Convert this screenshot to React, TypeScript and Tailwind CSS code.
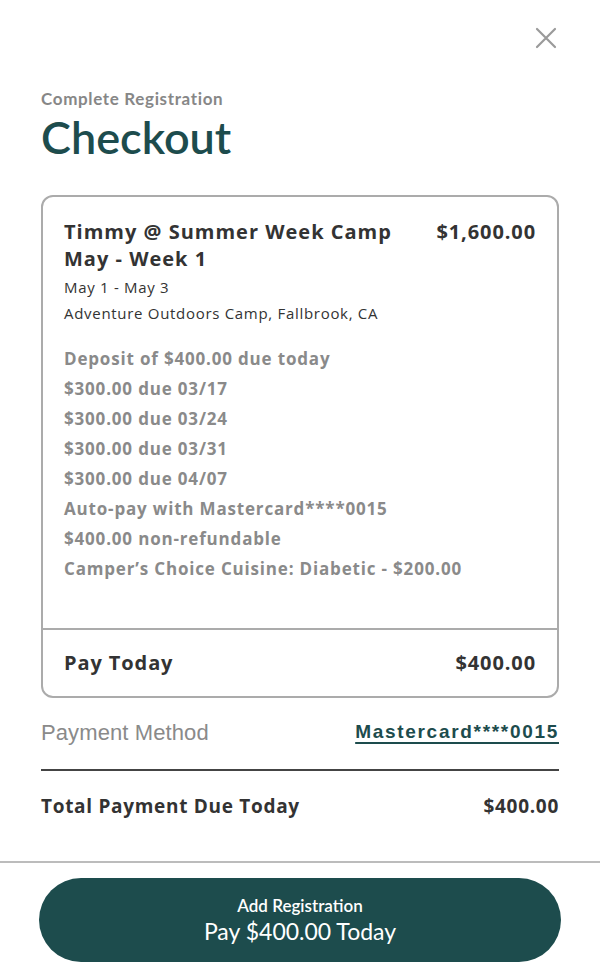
const schedule = [
  "Deposit of $400.00 due today",
  "$300.00 due 03/17",
  "$300.00 due 03/24",
  "$300.00 due 03/31",
  "$300.00 due 04/07",
  "Auto-pay with Mastercard****0015",
  "$400.00 non-refundable",
  "Camper\u2019s Choice Cuisine: Diabetic - $200.00",
];

const App = () => {
  return (
    <div className="w-[600px] h-[977px] bg-white flex flex-col font-['Open_Sans',sans-serif]">
      <div className="flex justify-end pt-[27px] pr-[43px]">
        <svg width="22" height="22" viewBox="0 0 22 22" className="text-[#9a9a9a]">
          <path d="M2 2 L20 20 M20 2 L2 20" stroke="currentColor" strokeWidth="2.2" strokeLinecap="round" />
        </svg>
      </div>

      <div className="px-[41px] pt-[40px]">
        <div className="font-['Lato',sans-serif] font-bold text-[17px] leading-[20px] tracking-[0.65px] text-[#878787]">Complete Registration</div>
        <h1 className="font-['Lato',sans-serif] font-semibold text-[45px] leading-[52px] text-[#1d4c4d] mt-[2px]">Checkout</h1>

        <div className="mt-[32px] border-2 border-[#ababab] rounded-[12px] flex flex-col h-[503px]">
          <div className="flex-1 px-[21px] pt-[21px]">
            <div className="flex justify-between gap-6">
              <div className="font-bold text-[20px] leading-[27px] tracking-[1px] text-[#333]">
                Timmy @ Summer Week Camp<br />May - Week 1
              </div>
              <div className="font-bold text-[20px] leading-[27px] tracking-[0.9px] text-[#333]">$1,600.00</div>
            </div>
            <div className="text-[15px] leading-[26px] tracking-[0.7px] text-[#333] mt-[2px]">May 1 - May 3</div>
            <div className="text-[15px] leading-[26px] tracking-[0.7px] text-[#333]">Adventure Outdoors Camp, Fallbrook, CA</div>
            <div className="mt-[18px] flex flex-col">
              {schedule.map((s) => (
                <div key={s} className="font-bold text-[17px] leading-[30px] tracking-[0.82px] text-[#8a8a8a]">{s}</div>
              ))}
            </div>
          </div>
          <div className="border-t-2 border-[#ababab] h-[68px] px-[21px] flex items-center justify-between">
            <span className="font-bold text-[20px] tracking-[0.9px] text-[#333]">Pay Today</span>
            <span className="font-bold text-[20px] tracking-[0.9px] text-[#333]">$400.00</span>
          </div>
        </div>

        <div className="flex justify-between items-center mt-[19px] h-[30px]">
          <span className="font-['Liberation_Sans',sans-serif] text-[22px] tracking-[0.1px] text-[#8a8a8a]">Payment Method</span>
          <span className="font-['Liberation_Sans',sans-serif] font-bold text-[19px] tracking-[1.7px] text-[#1d4c4d] underline underline-offset-[4px] decoration-[2px]">Mastercard****0015</span>
        </div>

        <div className="border-t-2 border-[#444] mt-[22px]"></div>

        <div className="flex justify-between items-center mt-[21px] h-[28px]">
          <span className="font-bold text-[19px] tracking-[0.7px] text-[#333]">Total Payment Due Today</span>
          <span className="font-bold text-[19px] tracking-[0.7px] text-[#333]">$400.00</span>
        </div>
      </div>

      <div className="border-t-2 border-[#bcbcbc] mt-[41px]"></div>

      <div className="px-[39px] pt-[15px]">
        <button className="w-full h-[84px] rounded-full bg-[#1d4c4d] text-white flex flex-col items-center justify-center font-['Lato',sans-serif]">
          <span className="font-semibold text-[17px] leading-[20px] mt-[2px]">Add Registration</span>
          <span className="text-[23px] leading-[30px]">Pay $400.00 Today</span>
        </button>
      </div>
    </div>
  );
};

export default App;
